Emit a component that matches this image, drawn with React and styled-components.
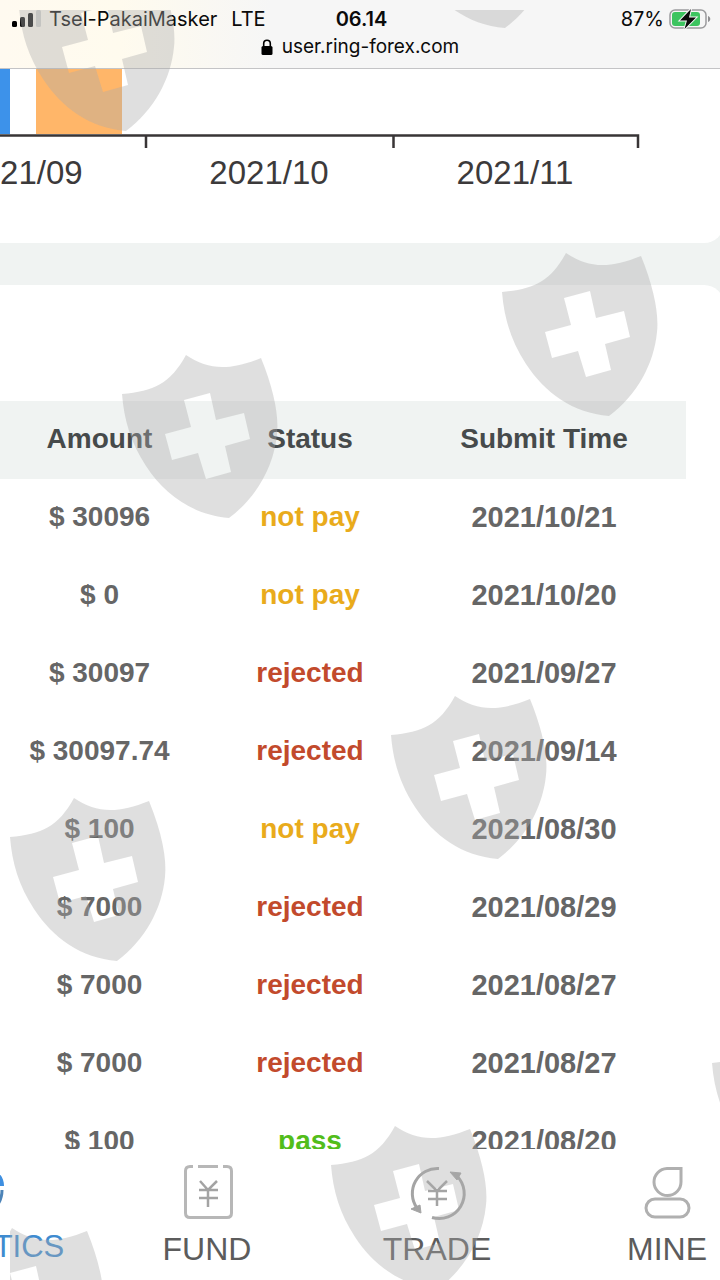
import React from "react";
import styled, { createGlobalStyle, css } from "styled-components";

const GlobalStyle = createGlobalStyle`
  *, *::before, *::after { box-sizing: border-box; }
  body {
    margin: 0;
    background: #ffffff;
    font-family: "Liberation Sans", Arial, sans-serif;
  }
`;

const Screen = styled.div`
  position: relative;
  display: flex;
  flex-direction: column;
  height: 100vh;
  overflow: hidden;
  background: #ffffff;
`;

const BrowserHeader = styled.header`
  flex: none;
  padding: 7px 0 9px;
  background: linear-gradient(90deg, #fffaf0 0, #fffbee 120px, #f6f6f6 270px);
  border-bottom: 1px solid #c4c4c6;
  font-family: Inter, sans-serif;
  color: #0b0b0b;
`;

const StatusBar = styled.div`
  display: grid;
  grid-template-columns: 1fr auto 1fr;
  align-items: center;
  padding: 0 9px 0 12px;
  font-size: 20px;
  line-height: 24px;
  white-space: nowrap;
`;

const Carrier = styled.div`
  display: flex;
  align-items: center;
  gap: 8px;
`;

const Network = styled.span`
  margin-left: 6px;
`;

const Clock = styled.time`
  font-weight: 600;
`;

const Battery = styled.div`
  display: flex;
  align-items: center;
  justify-content: flex-end;
  gap: 5px;
`;

const AddressBar = styled.div`
  display: flex;
  align-items: center;
  justify-content: center;
  gap: 9px;
  padding-top: 4px;
  font-size: 19px;
  line-height: 24px;
`;

const Content = styled.main`
  flex: 1;
  min-height: 0;
  overflow: hidden;
  background: #f0f3f2;
`;

const Card = styled.section`
  margin-right: -4px;
  background: #ffffff;
  ${(p) =>
    p.$end === "bottom"
      ? css`
          border-radius: 0 0 20px 0;
          padding-bottom: 50px;
          margin-bottom: 42px;
        `
      : css`
          border-radius: 0 20px 0 0;
          padding: 116px 38px 0 0;
        `}
`;

const Plot = styled.svg`
  display: block;
`;

const AxisLabels = styled.div`
  display: grid;
  grid-template-columns: repeat(3, 246px);
  margin-left: -100px;
  padding-top: 5px;
  font-size: 33px;
  line-height: 40px;
  text-align: center;
  color: #3c3a3b;
`;

const Records = styled.table`
  width: 100%;
  table-layout: fixed;
  border-collapse: collapse;
  font-size: 28px;
  font-weight: 700;
  text-align: center;
  color: #666666;
`;

const Column = styled.col`
  width: ${(p) => p.$width || "auto"};
`;

const HeadRow = styled.tr`
  height: 78px;
  background: #f0f3f2;
  color: #464a4b;
`;

const Row = styled.tr`
  height: 78px;
`;

const Heading = styled.th`
  padding: 0 ${(p) => (p.$first ? "19px" : 0)} 2px 0;
`;

const statusColors = {
  "not pay": "#e9ab1c",
  rejected: "#c24a2c",
  pass: "#52bd1a",
};

const Amount = styled.td`
  padding: 0 19px 2px 0;
`;

const Status = styled.td`
  padding: 0 0 2px;
  color: ${(p) => statusColors[p.$status]};
`;

const Submitted = styled.td`
  padding: 0 0 2px;
  font-size: 29px;
`;

const TabBar = styled.nav`
  flex: none;
  display: grid;
  grid-template-columns: repeat(4, 1fr);
  margin: 0 -62px 0 -138px;
  padding: 13px 0 11px;
  background: #ffffff;
`;

const Tab = styled.a`
  display: flex;
  flex-direction: column;
  align-items: center;
  gap: 7px;
  font-size: ${(p) => (p.$active ? "31px" : "32px")};
  line-height: ${(p) => (p.$active ? "36px" : "40px")};
  color: ${(p) => (p.$active ? "#3e8bd0" : "#5c5c5c")};
  text-decoration: none;
`;

const Watermark = styled.svg`
  position: absolute;
  inset: 10px 0 0 10px;
  width: calc(100% - 10px);
  height: calc(100% - 10px);
  overflow: hidden;
  pointer-events: none;
`;

const shields = [
  [19, -32],
  [398, -135],
  [502, 253],
  [122, 355],
  [391, 696],
  [10, 798],
  [712, 1024],
  [331, 1126],
  [-52, 1228],
];

const SHIELD =
  "M64 0 C86 15 107 16 139 3 C152 35 157 61 155 79 C152 111 135 142 107 163 C71 160 43 140 24 111 C9 88 2 65 0 39 C32 36 48 29 64 0 Z " +
  "M62 45 L88 38 L94 65 L122 58 L128 84 L103 91 L109 117 L84 124 L76 98 L50 105 L43 79 L69 72 Z";

const ShieldPattern = () => (
  <Watermark aria-hidden="true">
    {shields.map(([x, y]) => (
      <path
        key={`${x},${y}`}
        d={SHIELD}
        transform={`translate(${x - 10} ${y - 10})`}
        fill="#aaaaaa"
        fillOpacity="0.38"
        fillRule="evenodd"
      />
    ))}
  </Watermark>
);

const SignalIcon = () => (
  <svg width="29" height="18" viewBox="0 0 29 18" aria-hidden="true">
    <rect x="0" y="11" width="5" height="6" rx="1.5" fill="#000" />
    <rect x="8" y="7" width="5" height="10" rx="1.5" fill="#111" />
    <rect x="16" y="3" width="5" height="14" rx="1.5" fill="#111" />
    <rect x="24" y="0" width="5" height="17" rx="1.5" fill="#d4d4cf" />
  </svg>
);

const BatteryIcon = () => (
  <svg width="42" height="22" viewBox="0 0 42 22" aria-hidden="true">
    <rect x="1" y="2" width="36" height="18" rx="5" fill="none" stroke="#9b9b9d" strokeWidth="1.5" />
    <rect x="3" y="4" width="28" height="14" rx="3" fill="#3cc45f" />
    <path d="M39 8 C42 9 42 13 39 14 Z" fill="#8f8f91" />
    <path d="M22 1 L11 12.5 H18 L15.500 21 L27 9.500 H20 Z" fill="#0a0a0a" stroke="#f6f6f6" strokeWidth="2" paintOrder="stroke" />
  </svg>
);

const LockIcon = () => (
  <svg width="12" height="16" viewBox="0 0 12 16" aria-hidden="true">
    <rect x="0.500" y="7" width="11" height="9" rx="1.5" fill="#000" />
    <path d="M2.700 7 V4.500 A3.300 3.300 0 0 1 9.300 4.500 V7" fill="none" stroke="#000" strokeWidth="1.6" />
  </svg>
);

const StatisticsIcon = () => (
  <svg width="56" height="60" viewBox="0 0 56 60" fill="none" aria-hidden="true">
    <path d="M30 7 C44 5 55 11 55 24 H30 Z" fill="#3e8fe0" />
    <path d="M53 28 C53 44 40 54 28 54 C14 54 4 43 4 30 C4 18 12 8 25 7 V28 H50" stroke="#4d84b8" strokeWidth="3" />
  </svg>
);

const FundIcon = () => (
  <svg width="56" height="60" viewBox="0 0 56 60" fill="none" stroke="#b7b7b7" strokeWidth="3" aria-hidden="true">
    <path d="M14 4.500 H11 Q6.500 4.500 6.500 9 V51 Q6.500 55.500 11 55.500 H48 Q52.500 55.500 52.500 51 V9 Q52.500 4.500 48 4.500 H44 M19 4.500 H39" />
    <path d="M21 19 L29 28 L38 19 M29 28 V45 M20 28 H39 M20 36 H39" stroke="#a3a3a3" strokeWidth="2.5" />
  </svg>
);

const TradeIcon = () => (
  <svg width="60" height="60" viewBox="0 0 60 60" fill="none" stroke="#a4a4a4" strokeWidth="3" aria-hidden="true">
    <path d="M32 6.500 A25 25 0 0 0 10 46 M50 14 A25 25 0 0 1 25 55.500" />
    <path d="M43 10 L54 11 L50 18 Z M4 47 L13 43 L14 51 Z" fill="#a4a4a4" strokeWidth="1" />
    <path d="M20 19 L30 29 L40 19 M30 29 V44 M21 29 H40 M21 37 H40" strokeWidth="2.5" />
  </svg>
);

const MineIcon = () => (
  <svg width="56" height="60" viewBox="0 0 56 60" fill="none" stroke="#b0b0b0" strokeWidth="3" aria-hidden="true">
    <path d="M28 6.500 H42 V20 A13.500 13.500 0 1 1 28 6.500 Z" />
    <rect x="7" y="37" width="43" height="18" rx="9" />
  </svg>
);

const records = [
  ["30096", "not pay", "2021/10/21"],
  ["0", "not pay", "2021/10/20"],
  ["30097", "rejected", "2021/09/27"],
  ["30097.74", "rejected", "2021/09/14"],
  ["100", "not pay", "2021/08/30"],
  ["7000", "rejected", "2021/08/29"],
  ["7000", "rejected", "2021/08/27"],
  ["7000", "rejected", "2021/08/27"],
  ["100", "pass", "2021/08/20"],
];

const tabs = [
  { label: "STATISTICS", Icon: StatisticsIcon, active: true },
  { label: "FUND", Icon: FundIcon },
  { label: "TRADE", Icon: TradeIcon },
  { label: "MINE", Icon: MineIcon },
];

export default function App() {
  return (
    <Screen>
      <GlobalStyle />
      <BrowserHeader>
        <StatusBar>
          <Carrier>
            <SignalIcon />
            <span>Tsel-PakaiMasker</span>
            <Network>LTE</Network>
          </Carrier>
          <Clock>06.14</Clock>
          <Battery>
            <span>87%</span>
            <BatteryIcon />
          </Battery>
        </StatusBar>
        <AddressBar>
          <LockIcon />
          <span>user.ring-forex.com</span>
        </AddressBar>
      </BrowserHeader>

      <Content>
        <Card $end="bottom">
          <Plot width="640" height="79" viewBox="0 0 640 79" aria-hidden="true">
            <rect x="0" y="0" width="10" height="65" fill="#3d92ea" />
            <rect x="36" y="0" width="86" height="65" fill="#ffb669" />
            <path d="M0 66.500 H638 V79 M393.500 66 V79 M146 66 V79" fill="none" stroke="#383536" strokeWidth="2.500" />
          </Plot>
          <AxisLabels>
            <span>2021/09</span>
            <span>2021/10</span>
            <span>2021/11</span>
          </AxisLabels>
        </Card>

        <Card $end="top">
          <Records>
            <colgroup>
              <Column $width="218px" />
              <Column $width="184px" />
              <Column />
            </colgroup>
            <thead>
              <HeadRow>
                <Heading $first scope="col">Amount</Heading>
                <Heading scope="col">Status</Heading>
                <Heading scope="col">Submit Time</Heading>
              </HeadRow>
            </thead>
            <tbody>
              {records.map(([amount, status, date], i) => (
                <Row key={i}>
                  <Amount>$ {amount}</Amount>
                  <Status $status={status}>{status}</Status>
                  <Submitted>{date}</Submitted>
                </Row>
              ))}
            </tbody>
          </Records>
        </Card>
      </Content>

      <TabBar>
        {tabs.map(({ label, Icon, active }) => (
          <Tab key={label} href="#" $active={active}>
            <Icon />
            {label}
          </Tab>
        ))}
      </TabBar>
      <ShieldPattern />
    </Screen>
  );
}
